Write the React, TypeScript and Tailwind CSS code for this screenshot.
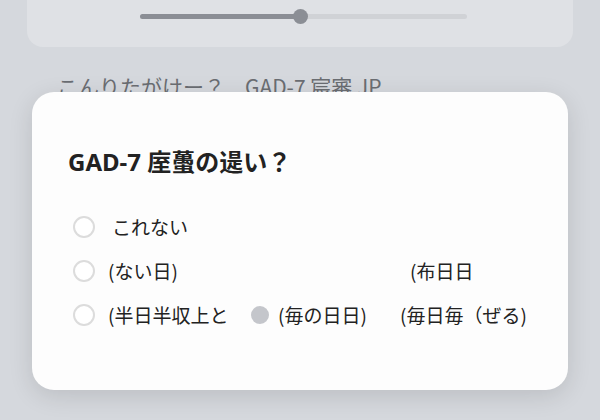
import React from 'react'

const jp = "font-['Noto_Sans_CJK_JP','Noto_Sans',sans-serif]"

function Radio({ filled = false }: { filled?: boolean }) {
  if (filled) {
    return <span className="block h-[18px] w-[18px] shrink-0 rounded-full bg-[#c4c6cb]" />
  }
  return <span className="block h-[22px] w-[22px] shrink-0 rounded-full border-2 border-[#dcdcdc] bg-white" />
}

export default function App() {
  return (
    <div className={`relative h-[420px] w-[600px] overflow-hidden bg-[#d5d8dd] ${jp}`}>
      {/* card behind the dialog */}
      <div className="mx-[27px] -mt-[40px] flex h-[87px] items-end rounded-2xl bg-[#dfe1e5] pb-[28px]">
        <div className="relative ml-[113px] h-[5px] w-[327px] rounded-full bg-[#d0d2d6]">
          <div className="h-full w-[160px] rounded-full bg-[#8b8e95]" />
          <span className="absolute left-[153px] top-[-5px] h-[15px] w-[15px] rounded-full bg-[#8b8e95]" />
        </div>
      </div>
      <p className="ml-[57px] mt-[24px] flex text-[21px] leading-[30px] text-[#6a6d72]">
        <span>こんりたがけー？</span>
        <span className="ml-[20px]">GAD-7 宸審 JP</span>
      </p>

      {/* dialog */}
      <div className="absolute left-[32px] top-[92px] h-[298px] w-[536px] rounded-[22px] bg-[#fdfdfd] px-[36px] pt-[53px] shadow-[0_6px_24px_rgba(0,0,0,0.12)]">
        <h2 className="font-['Noto_Sans','Noto_Sans_CJK_JP',sans-serif] text-[24px] font-bold leading-[34px] text-[#222]">
          GAD-7 庢蠆の遈い？
        </h2>
        <div className="mt-[26px] text-[19px] leading-[28px] text-[#222]">
          <div className="flex h-[44px] items-center">
            <span className="ml-[5px]"><Radio /></span>
            <span className="ml-[13px] pl-[4px]">これない</span>
          </div>
          <div className="flex h-[44px] items-center">
            <span className="ml-[5px]"><Radio /></span>
            <span className="ml-[13px] w-[302px]">(ない日)</span>
            <span>(布日日</span>
          </div>
          <div className="flex h-[44px] items-center">
            <span className="ml-[5px]"><Radio /></span>
            <span className="ml-[13px] w-[143px]">(半日半収上と</span>
            <Radio filled />
            <span className="ml-[9px] w-[122px]">(毎の日日)</span>
            <span>(毎日毎（ぜる)</span>
          </div>
        </div>
      </div>
    </div>
  )
}
